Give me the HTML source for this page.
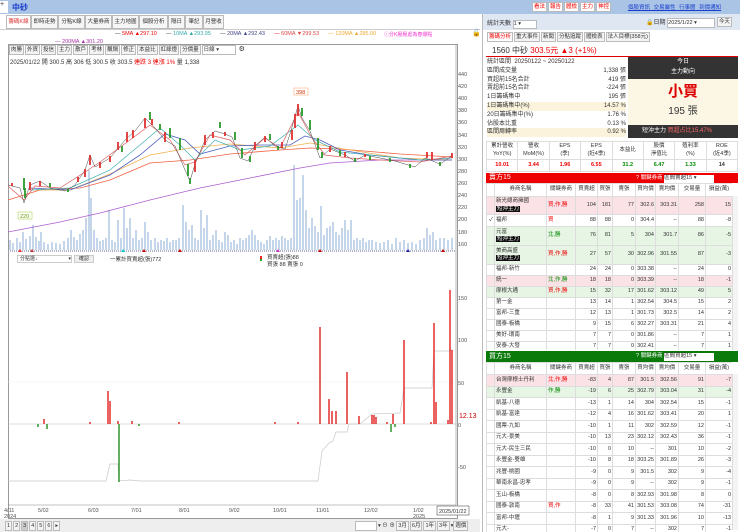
<!DOCTYPE html><html><head><meta charset="utf-8"><style>
*{margin:0;padding:0;box-sizing:border-box}
body{width:740px;height:532px;overflow:hidden;background:#fff;font-family:"Liberation Sans","Noto Sans CJK TC",sans-serif;font-size:7px;color:#333;position:relative}
.a{position:absolute}
.tab{position:absolute;top:15px;height:14px;border:1px solid #bbb;background:#f6f6f6;font-size:5.5px;line-height:12px;text-align:center;white-space:nowrap;overflow:hidden}
.btn{display:inline-block;border:1px solid #bbb;background:#f4f4f4;padding:0 1px;height:10px;line-height:8px;font-size:5.5px;margin-right:1px;vertical-align:top}
table{border-collapse:collapse;table-layout:fixed}
td{border:1px solid #ddd;font-size:5.5px;line-height:7.5px;padding:0 1px;overflow:hidden;white-space:nowrap;text-align:right}
td.l{text-align:left}
td.c{text-align:center}
.bk{background:#111;color:#fff;font-size:5.5px;padding:0 1px}
.r{color:#e00}.g{color:#080}
</style></head><body>
<div class="a" style="left:0;top:0;width:740px;height:14px;background:#a9c4e4"></div>
<div class="a" style="left:0;top:1px;width:8px;height:12px;background:#fff;font-size:7px">+</div>
<div class="a" style="left:12px;top:2px;font-size:8px;color:#1a3fd0;font-weight:bold">中砂</div>
<div class="a" style="left:532px;top:2px;white-space:nowrap">
<span class="btn r" style="background:#fff">看法</span><span class="btn r" style="background:#fff">報告</span><span class="btn r" style="background:#fff">體檢</span><span class="btn r" style="background:#fff">主力</span><span class="btn r" style="background:#fff">神控</span></div>
<div class="a" style="left:628px;top:3px;font-size:5.5px;color:#1a3fd0;text-decoration:underline;word-spacing:2px;white-space:nowrap">個股資訊 交易屬性 行事曆 到價通知</div>
<div class="tab" style="left:6px;width:25px;color:#d33;background:#fff">籌碼K線</div>
<div class="tab" style="left:31px;width:27px">即時走勢</div>
<div class="tab" style="left:58px;width:27px">分點K線</div>
<div class="tab" style="left:85px;width:27px">大量券商</div>
<div class="tab" style="left:112px;width:27px">主力地圖</div>
<div class="tab" style="left:139px;width:29px">個股分析</div>
<div class="tab" style="left:168px;width:17px">隔日</div>
<div class="tab" style="left:185px;width:18px">筆記</div>
<div class="tab" style="left:203px;width:21px">月營收</div>
<div class="a" style="left:0;top:29px;width:480px;height:1px;background:#ccc"></div>
<div class="a" style="left:115px;top:31px;font-size:5.5px;white-space:nowrap"><span>—</span> <span class="r">5MA ▲297.10</span>&nbsp;&nbsp;&nbsp;&nbsp;&nbsp;&nbsp;<span>—</span> <span style="color:#3aa">10MA ▲293.95</span>&nbsp;&nbsp;&nbsp;&nbsp;&nbsp;&nbsp;<span>—</span> <span style="color:#448">20MA ▲292.43</span>&nbsp;&nbsp;&nbsp;&nbsp;&nbsp;&nbsp;<span class="r">—</span> <span style="color:#d44">60MA ▼299.53</span>&nbsp;&nbsp;&nbsp;&nbsp;&nbsp;&nbsp;<span style="color:#ea3">— 120MA ▲285.00</span></div>
<div class="a" style="left:55px;top:39px;font-size:5.5px;color:#a3a;white-space:nowrap">— 200MA ▲301.20</div>
<div class="a" style="left:384px;top:31px;font-size:5px;color:#e3c;white-space:nowrap">ⓘ分K壓壓處為春爆點</div>
<div class="a" style="left:472px;top:29px;font-size:7px">🔓</div>
<div class="a" style="left:8px;top:44px;width:450px;height:475px;border:1px solid #999"></div>
<div class="a" style="left:9px;top:45px;white-space:nowrap"><span class="btn">肉勝</span><span class="btn">外資</span><span class="btn">投信</span><span class="btn">主力</span><span class="btn">散戶</span><span class="btn">考林</span><span class="btn">飄鍋</span><span class="btn">修正</span><span class="btn">本益比</span><span class="btn">紅綠燈</span><span class="btn">分價量</span><span class="btn" style="width:34px;background:#fff">日線 ▾</span> ⚙</div>
<div class="a" style="left:10px;top:57px;font-size:6px;white-space:nowrap">2025/01/22 開 300.5 高 306 低 300.5 收 303.5 <span class="r">連跌 3 連漲 1%</span> 量 1,338</div>
<svg class="a" style="left:0;top:0" width="480" height="532">
<g font-size="5.5" fill="#555" font-family="Liberation Sans">
<text x="458" y="76">440</text><text x="458" y="88">420</text><text x="458" y="100">400</text><text x="458" y="112">380</text><text x="458" y="124">360</text><text x="458" y="137">340</text><text x="458" y="149">320</text><text x="458" y="161">300</text><text x="458" y="173">280</text><text x="458" y="185">260</text><text x="458" y="197">240</text><text x="458" y="209">220</text><text x="458" y="221">200</text><text x="458" y="234">180</text><text x="458" y="246">160</text>
<text x="458" y="300">150</text><text x="458" y="342">100</text><text x="458" y="385">50</text><text x="458" y="427">0</text><text x="458" y="469">-50</text>
<text x="4" y="512">4/11</text><text x="4" y="518">2024</text><text x="38" y="512">5/02</text><text x="88" y="512">6/03</text><text x="131" y="512">7/01</text><text x="179" y="512">8/01</text><text x="229" y="512">9/02</text><text x="273" y="512">10/01</text><text x="316" y="512">11/01</text><text x="364" y="512">12/02</text><text x="413" y="512">1/02</text><text x="413" y="518">2025</text>
</g>
<text x="459" y="418" font-size="7" fill="#c00">12.13</text>
<rect x="437" y="506" width="32" height="9" fill="#fff" stroke="#555" stroke-width=".6"/><text x="439" y="513" font-size="5.5" fill="#333">2025/01/22</text>
<line x1="456" y1="45" x2="456" y2="505" stroke="#888" stroke-width=".6"/>
<line x1="8" y1="505" x2="456" y2="505" stroke="#888" stroke-width=".6"/>
<path stroke="#b8cce4" stroke-width="1.6" d="M10 250v-10M13 250v-7M17 250v-12M20 250v-8M23 250v-18M26 250v-11M30 250v-14M33 250v-25M36 250v-13M39 250v-9M41 250v-18M44 250v-8M48 250v-6M52 250v-8M56 250v-7M60 250v-6M64 250v-9M68 250v-12M71 250v-20M74 250v-13M77 250v-10M80 250v-16M83 250v-20M86 250v-32M89 250v-80M91 250v-52M94 250v-20M97 250v-12M100 250v-9M103 250v-10M106 250v-12M109 250v-40M112 250v-10M115 250v-8M118 250v-30M121 250v-12M124 250v-42M127 250v-22M130 250v-32M133 250v-12M136 250v-20M139 250v-10M142 250v-12M145 250v-28M148 250v-18M151 250v-10M155 250v-12M158 250v-8M161 250v-10M164 250v-9M167 250v-12M170 250v-8M173 250v-10M176 250v-10M179 250v-12M183 250v-45M186 250v-28M189 250v-20M192 250v-25M195 250v-12M198 250v-10M201 250v-40M204 250v-22M207 250v-35M210 250v-10M213 250v-15M216 250v-20M219 250v-10M222 250v-8M225 250v-18M228 250v-15M231 250v-8M234 250v-10M237 250v-6M240 250v-12M243 250v-10M246 250v-12M249 250v-15M252 250v-20M255 250v-15M258 250v-10M261 250v-8M264 250v-6M267 250v-10M270 250v-14M273 250v-10M276 250v-12M279 250v-10M282 250v-14M285 250v-12M288 250v-10M291 250v-12M294 250v-85M297 250v-50M300 250v-52M303 250v-75M306 250v-40M309 250v-22M312 250v-32M315 250v-24M318 250v-18M321 250v-44M324 250v-15M327 250v-22M330 250v-24M333 250v-28M336 250v-18M339 250v-15M342 250v-22M345 250v-30M348 250v-20M351 250v-30M354 250v-10M357 250v-12M360 250v-10M363 250v-12M366 250v-8M369 250v-10M372 250v-10M376 250v-8M380 250v-7M384 250v-8M388 250v-10M392 250v-6M396 250v-12M400 250v-8M404 250v-10M408 250v-7M412 250v-8M416 250v-6M420 250v-10M424 250v-12M427 250v-22M430 250v-15M433 250v-18M436 250v-10M440 250v-12M444 250v-12M448 250v-10M452 250v-12"/>
<polyline fill="none" stroke="#b05fd0" stroke-width=".8" points="8,232 60,222 100,213 150,200 200,188 250,178 300,168 330,163 380,160 452,160"/>
<polyline fill="none" stroke="#f06040" stroke-width=".8" points="8,200 40,190 80,188 110,180 150,163 190,160 230,154 280,150 310,148 340,149 400,154 452,157"/>
<polyline fill="none" stroke="#f0b050" stroke-width=".8" points="30,190 70,190 110,174 150,155 190,148 230,144 280,148 310,143 350,150 400,158 452,160"/>
<polyline fill="none" stroke="#5060c0" stroke-width=".8" points="30,188 70,190 110,175 140,155 165,134 185,140 200,154 230,146 260,145 290,145 305,136 320,140 340,150 370,155 420,160 452,160"/>
<polyline fill="none" stroke="#40b0b0" stroke-width=".7" points="30,190 70,188 110,170 140,145 160,128 180,145 195,160 215,140 240,150 270,146 298,125 315,140 340,152 370,155 420,160 452,158"/>
<polyline fill="none" stroke="#dd6060" stroke-width=".7" points="8,186 24,200 35,186 60,188 85,172 100,162 130,140 150,125 170,140 185,165 195,162 210,135 230,140 245,155 265,138 280,148 298,112 312,138 325,155 350,158 380,160 420,162 452,156"/>
<polyline fill="none" stroke="#444" stroke-width=".5" points="8,185 20,188 24,203 30,185 40,181 50,188 65,191 75,185 85,170 90,155 95,167 110,158 125,140 135,131 145,118 155,128 165,140 175,146 185,170 190,181 195,164 205,140 215,131 225,134 232,137 240,158 248,161 255,146 265,137 275,146 285,149 290,134 298,106 302,118 310,131 320,158 330,149 345,155 355,161 365,155 380,158 395,161 415,167 425,158 440,164 452,156"/>
<path stroke-width="1.8" stroke="#e03030" d="M12 186v-3M30 190v-8M40 186v-5M78 182v-5M85 177v-8M90 165v-10M100 168v-6M110 162v-6M118 150v-8M127 142v-10M133 138v-8M145 128v-10M152 125v-6M165 142v-10M195 172v-12M205 145v-10M213 138v-6M225 136v-4M255 150v-8M265 142v-6M282 148v-6M292 140v-10M295 128v-14M298 116v-12M330 152v-6M345 157v-5M365 157v-3M427 158v-6M432 160v-8M452 158v-5"/>
<path stroke-width="1.8" stroke="#2a9a2a" d="M24 190v-12M25 198v-10M50 187v-4M68 192v-3M122 152v-6M150 120v-8M160 130v-6M170 138v-10M180 150v-12M188 176v-12M190 184v-6M220 128v-6M235 140v-8M242 158v-10M250 162v-6M270 140v-6M278 150v-4M302 116v-8M310 130v-10M318 150v-12M322 158v-6M340 156v-6M355 162v-4M370 160v-4M390 162v-4M410 168v-4M440 166v-4"/>
<rect x="18" y="212" width="14" height="7" fill="#fff" stroke="#9c3" stroke-width=".5"/><text x="20" y="218" font-size="5.5" fill="#690">220</text>
<rect x="294" y="88" width="14" height="7" fill="#fff" stroke="#f96" stroke-width=".5"/><text x="296" y="94" font-size="5.5" fill="#c30">398</text>
<line x1="8" y1="251" x2="456" y2="251" stroke="#99b" stroke-width="1.5" stroke-dasharray="1 1"/>
<path d="M20 249l2 3h-4z" fill="#e33"/><path d="M32 249l2 3h-4z" fill="#c33"/><path d="M123 249l2 3h-4z" fill="#0cc"/><path d="M144 249l2 3h-4z" fill="#c00"/><path d="M180 249l2 3h-4z" fill="#c00"/><path d="M278 249l2 3h-4z" fill="#c3c"/><path d="M320 249l2 3h-4z" fill="#c00"/><path d="M408 249l2 3h-4z" fill="#22a"/><path d="M443 249l2 3h-4z" fill="#c00"/>
<line x1="8" y1="382" x2="456" y2="382" stroke="#eee" stroke-width=".5"/>
<line x1="8" y1="424" x2="456" y2="424" stroke="#bbb" stroke-width=".6"/>
<polyline fill="none" stroke="#c8c8c8" stroke-width=".7" points="8,481 106,481 110,464 118,464 119,481 130,480 140,481 318,481 322,451 329,443 333,441 336,432 347,432 349,424 360,424 372,414 400,413 404,388 432,388 434,351 450,351 452,349"/>
<path stroke-width="1.4" stroke="#e02020" d="M108 424v-33M110 424v-23M320 424v-97M329 424v-25M332 424v-13M336 424v-13M347 424v-52M359 424v-8M372 424v-9M374 424v-9M376 424v-7M393 424v-10M404 424v-84M434 424v-101M436 424v-22M448 424v-4M450 424v-134M452 424v-74M44 424v-5M90 424v-2M118 424v-3M132 424v-3M179 424v-2M275 424v-2M298 424v-2M387 424v-2M431 424v-2"/>
<path stroke-width="1.4" stroke="#209020" d="M119 424v58M38 424v3M47 424v5M139 424v2M391 424v8M395 424v3"/>
<rect x="260" y="256" width="2" height="3" fill="#e22"/><rect x="260" y="259" width="2" height="2" fill="#2a2"/>
</svg>
<div class="a" style="left:17px;top:255px;width:55px;height:8px;border:1px solid #ccc;font-size:5px;line-height:6px;padding-left:2px;white-space:nowrap">分點選↓ <span style="float:right">▾</span></div>
<div class="a" style="left:74px;top:255px;width:20px;height:8px;border:1px solid #ccc;background:#eee;font-size:5px;line-height:6px;text-align:center">確認</div>
<div class="a" style="left:110px;top:255px;font-size:5.5px;white-space:nowrap">一累計買賣超(張)772</div>
<div class="a" style="left:267px;top:255px;font-size:5.5px;line-height:7px;white-space:nowrap">買賣超(張)88<br>買張 88 賣張 0</div>
<div class="a" style="left:0;top:519px;width:480px;height:13px;background:#eee"></div>
<div class="a" style="left:5px;top:521px;white-space:nowrap"><span class="btn">1</span><span class="btn">2</span><span class="btn" style="background:#ccc">3</span><span class="btn">4</span><span class="btn">5</span><span class="btn">6</span><span class="btn">▸</span></div>
<div class="a" style="left:355px;top:521px;font-size:5.5px;white-space:nowrap"><span class="btn" style="width:22px;background:#fff">&nbsp;</span>▾ ⊖ ⊕ <span class="btn">3月</span><span class="btn">6月</span><span class="btn">1年</span><span class="btn">3年</span>▾<span class="btn">週價</span></div>
<!-- RIGHT -->
<div class="a" style="left:482px;top:14px;width:258px;height:518px;background:#fff;border-left:1px solid #bbb"></div>
<div class="a" style="left:483px;top:14px;width:257px;height:16px;background:#dfe7f3"></div>
<div class="a" style="left:487px;top:18px;font-size:6px;white-space:nowrap">統計天數 <span style="display:inline-block;width:24px;height:9px;border:1px solid #bbb;background:#fff;font-size:5.5px;line-height:7px">1 ▾</span></div>
<div class="a" style="left:646px;top:17px;font-size:6px;white-space:nowrap">🔒日期 <span style="display:inline-block;width:48px;height:10px;border:1px solid #bbb;background:#fff;font-size:5.5px;line-height:8px">2025/1/22 ▾</span> <span class="btn">今天</span></div>
<div class="a" style="left:487px;top:32px;white-space:nowrap"><span class="btn r" style="background:#fff">籌碼分析</span><span class="btn">重大事件</span><span class="btn">新聞</span><span class="btn">分點追蹤</span><span class="btn">體檢表</span><span class="btn">法人目標(358元)</span></div>
<div class="a" style="left:492px;top:45px;font-size:8px;white-space:nowrap">1560 中砂 <span class="r">303.5元 ▲3 (+1%)</span></div>
<div class="a" style="left:486px;top:56px;width:252px;height:1px;background:#d00"></div>
<div class="a" style="left:487px;top:58px;font-size:6px;line-height:8.8px;width:139px;white-space:nowrap">
<div>統計區間 &nbsp;20250122 ~ 20250122</div>
<div>區間成交量<span style="float:right">1,338 張</span></div>
<div>買超前15名合計<span style="float:right">419 張</span></div>
<div>賣超前15名合計<span style="float:right">-224 張</span></div>
<div>1日籌碼集中<span style="float:right">195 張</span></div>
<div style="background:#fbf3dc">1日籌碼集中(%)<span style="float:right">14.57 %</span></div>
<div>20日籌碼集中(%)<span style="float:right">1.76 %</span></div>
<div>佔股本比重<span style="float:right">0.13 %</span></div>
<div style="background:#fbf3dc">區間周轉率<span style="float:right">0.92 %</span></div>
</div>
<div class="a" style="left:628px;top:57px;width:110px;height:22px;background:#333;color:#fff;text-align:center;font-size:6px;line-height:10px">今日<br>主力動向</div>
<div class="a" style="left:628px;top:79px;width:110px;height:46px;background:#fbf7e4;text-align:center"><div style="color:#d00;font-size:15px;font-weight:bold;line-height:20px;margin-top:3px">小買</div><div style="font-size:10px">195 張</div></div>
<div class="a" style="left:628px;top:125px;width:110px;height:13px;background:#333;color:#fff;font-size:6px;line-height:13px;padding-left:14px;white-space:nowrap">短沖主力 <span style="color:#f66">買超占比15.47%</span></div>
<table class="a" style="left:486px;top:141px;width:252px">
<tr style="height:18px"><td class="c">累計營收<br>YoY(%)</td><td class="c">營收<br>MoM(%)</td><td class="c">EPS<br>(季)</td><td class="c">EPS<br>(近4季)</td><td class="c">本益比</td><td class="c">股價<br>淨值比</td><td class="c">殖利率<br>(%)</td><td class="c">ROE<br>(近4季)</td></tr>
<tr style="height:12px;font-weight:bold"><td class="c r">10.01</td><td class="c r">3.44</td><td class="c r">1.96</td><td class="c r">6.55</td><td class="c g">31.2</td><td class="c g">6.47</td><td class="c g">1.33</td><td class="c">14</td></tr>
</table>
<div class="a" style="left:486px;top:173px;width:252px;height:10px;background:#e00;color:#fff;font-size:7px;line-height:10px;padding-left:3px">賣方15<span style="position:absolute;left:150px;font-size:5.5px;white-space:nowrap">? 關鍵券商 <span style="display:inline-block;width:50px;height:8px;background:#fff;color:#333;line-height:7px">區間賣超15 ▾</span></span></div>
<div class="a" style="left:486px;top:183px;width:246px;height:167px;overflow:hidden">
<table style="width:246px">
<colgroup><col style="width:8px"><col style="width:52px"><col style="width:29px"><col style="width:22px"><col style="width:15px"><col style="width:23px"><col style="width:20px"><col style="width:23px"><col style="width:27px"><col style="width:27px"></colgroup>
<tr style="height:13px"><td></td><td class="c">券商名稱</td><td class="c">關鍵券商</td><td class="c">買賣超</td><td class="c">買張</td><td class="c">賣張</td><td class="c">買均價</td><td class="c">賣均價</td><td class="c">交易量</td><td class="c">損益(萬)</td></tr>
<tr style="height:18px;background:#fbe2e6"><td></td><td class="l">新光總商擁國<br><span class="bk">短沖主力</span></td><td class="l r">買,作,勝</td><td>104</td><td>181</td><td>77</td><td>302.6</td><td>303.31</td><td>258</td><td>15</td></tr>
<tr style="height:12px"><td>✓</td><td class="l">福邦</td><td class="l r">買</td><td>88</td><td>88</td><td>0</td><td>304.4</td><td>--</td><td>88</td><td>-8</td></tr>
<tr style="height:19px;background:#e6f5e4"><td></td><td class="l">元富<br><span class="bk">短沖主力</span></td><td class="l g">北,勝</td><td>76</td><td>81</td><td>5</td><td>304</td><td>301.7</td><td>86</td><td>-5</td></tr>
<tr style="height:19px;background:#e6f5e4"><td></td><td class="l">美商高盛<br><span class="bk">短沖主力</span></td><td class="l r">買,作,勝</td><td>27</td><td>57</td><td>30</td><td>302.96</td><td>301.55</td><td>87</td><td>-3</td></tr>
<tr style="height:11px"><td></td><td class="l">福邦-新竹</td><td></td><td>24</td><td>24</td><td>0</td><td>303.38</td><td>--</td><td>24</td><td>0</td></tr>
<tr style="height:11px;background:#fbe2e6"><td></td><td class="l">統一</td><td class="l g">北,作,勝</td><td>18</td><td>18</td><td>0</td><td>303.39</td><td>--</td><td>18</td><td>-1</td></tr>
<tr style="height:11px;background:#e6f5e4"><td></td><td class="l">摩根大通</td><td class="l r">買,作,勝</td><td>15</td><td>32</td><td>17</td><td>301.62</td><td>303.12</td><td>49</td><td>5</td></tr>
<tr style="height:11px"><td></td><td class="l">第一金</td><td></td><td>13</td><td>14</td><td>1</td><td>302.54</td><td>304.5</td><td>15</td><td>2</td></tr>
<tr style="height:11px"><td></td><td class="l">富邦-三重</td><td></td><td>12</td><td>13</td><td>1</td><td>301.73</td><td>302.5</td><td>14</td><td>2</td></tr>
<tr style="height:11px"><td></td><td class="l">國泰-板橋</td><td></td><td>9</td><td>15</td><td>6</td><td>302.27</td><td>303.31</td><td>21</td><td>4</td></tr>
<tr style="height:11px"><td></td><td class="l">美好-環南</td><td></td><td>7</td><td>7</td><td>0</td><td>301.86</td><td>--</td><td>7</td><td>1</td></tr>
<tr style="height:11px"><td></td><td class="l">安泰-大發</td><td></td><td>7</td><td>7</td><td>0</td><td>302.41</td><td>--</td><td>7</td><td>1</td></tr>
</table></div>
<div class="a" style="left:486px;top:351px;width:252px;height:11px;background:#0a7a0a;color:#fff;font-size:7px;line-height:11px;padding-left:3px">買方15<span style="position:absolute;left:150px;font-size:5.5px;white-space:nowrap">? 關鍵券商 <span style="display:inline-block;width:50px;height:8px;background:#fff;color:#333;line-height:7px">區間買超15 ▾</span></span></div>
<div class="a" style="left:486px;top:362px;width:246px;height:170px;overflow:hidden">
<table style="width:246px">
<colgroup><col style="width:8px"><col style="width:52px"><col style="width:29px"><col style="width:22px"><col style="width:15px"><col style="width:23px"><col style="width:20px"><col style="width:23px"><col style="width:27px"><col style="width:27px"></colgroup>
<tr style="height:12px"><td></td><td class="c">券商名稱</td><td class="c">關鍵券商</td><td class="c">買賣超</td><td class="c">買張</td><td class="c">賣張</td><td class="c">買均價</td><td class="c">賣均價</td><td class="c">交易量</td><td class="c">損益(萬)</td></tr>
<tr style="height:11.5px;background:#fbe2e6"><td></td><td class="l">台灣摩根士丹利</td><td class="l r">北,作,勝</td><td>-83</td><td>4</td><td>87</td><td>301.5</td><td>302.56</td><td>91</td><td>-7</td></tr>
<tr style="height:11.5px;background:#e6f5e4"><td></td><td class="l">永豐金</td><td class="l g">作,勝</td><td>-19</td><td>6</td><td>25</td><td>302.79</td><td>303.04</td><td>31</td><td>-4</td></tr>
<tr style="height:11.5px"><td></td><td class="l">凱基-八德</td><td></td><td>-13</td><td>1</td><td>14</td><td>304</td><td>302.54</td><td>15</td><td>-1</td></tr>
<tr style="height:11.5px"><td></td><td class="l">凱基-富達</td><td></td><td>-12</td><td>4</td><td>16</td><td>301.62</td><td>303.41</td><td>20</td><td>1</td></tr>
<tr style="height:11.5px"><td></td><td class="l">國票-九如</td><td></td><td>-10</td><td>1</td><td>11</td><td>302</td><td>302.59</td><td>12</td><td>-1</td></tr>
<tr style="height:11.5px"><td></td><td class="l">元大-景美</td><td></td><td>-10</td><td>13</td><td>23</td><td>302.12</td><td>302.43</td><td>36</td><td>-1</td></tr>
<tr style="height:11.5px"><td></td><td class="l">元大-民生三民</td><td></td><td>-10</td><td>0</td><td>10</td><td>--</td><td>301</td><td>10</td><td>-2</td></tr>
<tr style="height:11.5px"><td></td><td class="l">永豐金-雙雄</td><td></td><td>-10</td><td>8</td><td>18</td><td>303.25</td><td>301.89</td><td>26</td><td>-3</td></tr>
<tr style="height:11.5px"><td></td><td class="l">兆豐-桃園</td><td></td><td>-9</td><td>0</td><td>9</td><td>301.5</td><td>302</td><td>9</td><td>-4</td></tr>
<tr style="height:11.5px"><td></td><td class="l">華南永昌-忠孝</td><td></td><td>-9</td><td>0</td><td>9</td><td>--</td><td>302</td><td>9</td><td>-1</td></tr>
<tr style="height:11.5px"><td></td><td class="l">玉山-板橋</td><td></td><td>-8</td><td>0</td><td>8</td><td>302.93</td><td>301.98</td><td>8</td><td>0</td></tr>
<tr style="height:11.5px"><td></td><td class="l">國泰-敦南</td><td class="l r">買,作</td><td>-8</td><td>33</td><td>41</td><td>301.53</td><td>303.08</td><td>74</td><td>-31</td></tr>
<tr style="height:11.5px"><td></td><td class="l">富邦-中壢</td><td></td><td>-8</td><td>1</td><td>9</td><td>301.33</td><td>301.96</td><td>10</td><td>-13</td></tr>
<tr style="height:11.5px"><td></td><td class="l">元大-</td><td></td><td>-7</td><td>0</td><td>7</td><td>--</td><td>302</td><td>7</td><td>-1</td></tr>
</table></div>
<div class="a" style="left:732px;top:196px;width:6px;height:154px;border-left:1px solid #ddd;background:#f4f4f4"></div>
<div class="a" style="left:732px;top:374px;width:6px;height:156px;border-left:1px solid #ddd;background:#f4f4f4"></div>
</body></html>
